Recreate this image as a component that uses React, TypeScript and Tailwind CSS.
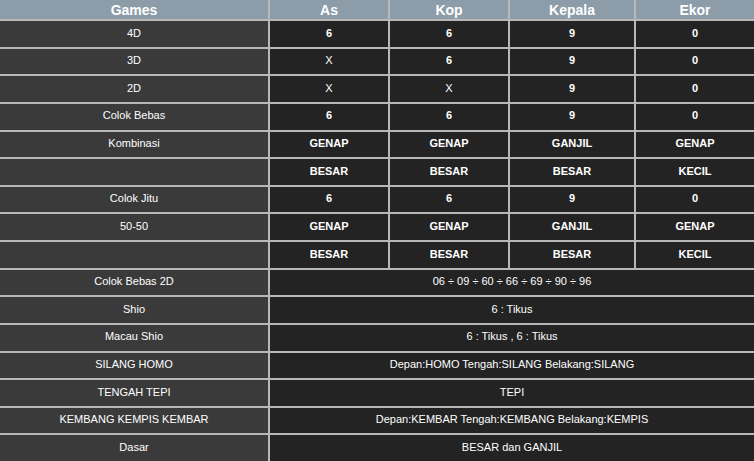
const head = ["Games", "As", "Kop", "Kepala", "Ekor"];

type Row = [string, ...string[]];

const rows: Row[] = [
  ["4D", "6", "6", "9", "0"],
  ["3D", "X", "6", "9", "0"],
  ["2D", "X", "X", "9", "0"],
  ["Colok Bebas", "6", "6", "9", "0"],
  ["Kombinasi", "GENAP", "GENAP", "GANJIL", "GENAP"],
  ["", "BESAR", "BESAR", "BESAR", "KECIL"],
  ["Colok Jitu", "6", "6", "9", "0"],
  ["50-50", "GENAP", "GENAP", "GANJIL", "GENAP"],
  ["", "BESAR", "BESAR", "BESAR", "KECIL"],
  ["Colok Bebas 2D", "06 \u00f7 09 \u00f7 60 \u00f7 66 \u00f7 69 \u00f7 90 \u00f7 96"],
  ["Shio", "6 : Tikus"],
  ["Macau Shio", "6 : Tikus , 6 : Tikus"],
  ["SILANG HOMO", "Depan:HOMO Tengah:SILANG Belakang:SILANG"],
  ["TENGAH TEPI", "TEPI"],
  ["KEMBANG KEMPIS KEMBAR", "Depan:KEMBAR Tengah:KEMBANG Belakang:KEMPIS"],
  ["Dasar", "BESAR dan GANJIL"],
];

export default function App() {
  return (
    <div
      className="w-[754px] h-[461px] bg-[#b8b8b8] grid grid-cols-[268px_118px_118px_124px_118px] grid-rows-[19px_repeat(16,1fr)] gap-x-[2px] gap-y-[2px] text-white overflow-hidden"
      style={{ fontFamily: '"Liberation Sans", Arial, sans-serif' }}
    >
      {head.map((h) => (
        <div key={h} className="bg-[#8c9ca8] flex items-center justify-center text-[14px] font-bold leading-none">
          {h}
        </div>
      ))}
      {rows.map((r, i) => (
        <div key={i} className="contents">
          <div className="bg-[#3a3a3a] flex items-center justify-center text-[11px] pb-[2px]">{r[0]}</div>
          {r.length === 2 ? (
            <div className="col-span-4 bg-[#232323] flex items-center justify-center text-[11px] pb-[2px]">{r[1]}</div>
          ) : (
            r.slice(1).map((c, j) => (
              <div
                key={j}
                className={
                  c === "X"
                    ? "bg-[#232323] flex items-center justify-center text-[11px] pb-[2px]"
                    : "bg-[#232323] flex items-center justify-center text-[11px] font-bold pb-[2px]"
                }
              >
                {c}
              </div>
            ))
          )}
        </div>
      ))}
    </div>
  );
}
